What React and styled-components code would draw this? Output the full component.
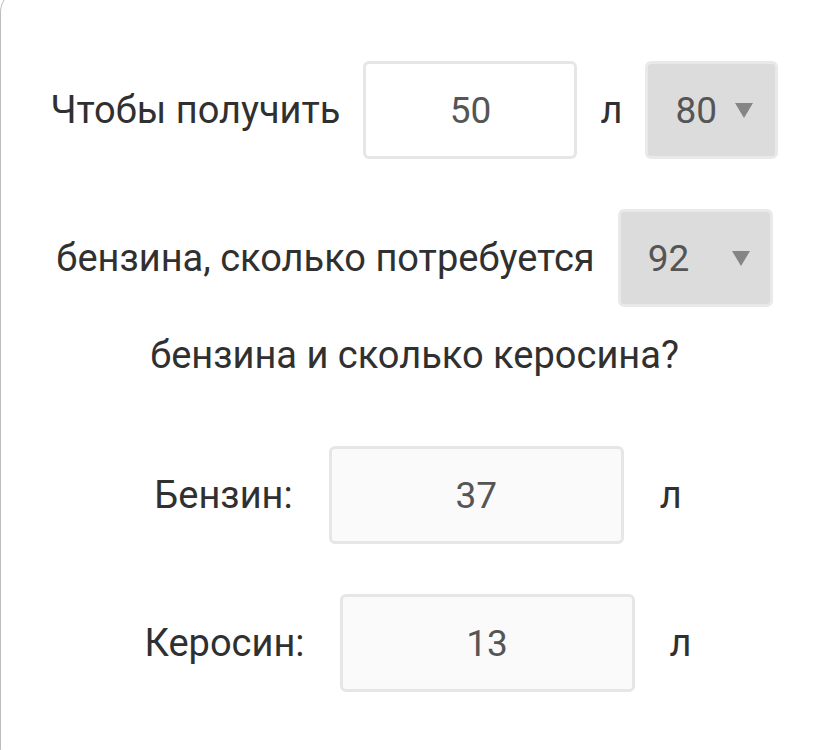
import styled, { createGlobalStyle } from "styled-components"

const GlobalStyle = createGlobalStyle`
    html, body {
        margin: 0;
        padding: 0;
        background: #fff;
        overflow: hidden;
    }

    body {
        font-family: Roboto, "Noto Sans", sans-serif;
        color: #333;
    }
`

const Card = styled.div`
    margin: -10px -40px 0 0;
    height: 780px;
    border: 1.5px solid #bdbdbd;
    border-radius: 22px;
    padding: 70px 40px 0 6px;
    box-sizing: border-box;
`

const Row = styled.div`
    display: flex;
    justify-content: center;
    align-items: center;
    gap: ${p => p.$gap || 23}px;
    margin-top: ${p => p.$top || 0}px;
    padding-left: ${p => p.$shift || 0}px;
`

const Label = styled.span`
    font-size: 38px;
    line-height: 48px;
    color: #303030;
    white-space: nowrap;
`

const Field = styled.div`
    width: ${p => p.$width}px;
    height: 98px;
    box-sizing: border-box;
    border: 3px solid #e6e6e6;
    border-radius: 6px;
    background: ${p => p.$readOnly ? "#fafafa" : "#fff"};
    display: flex;
    align-items: center;
    justify-content: center;
    font-size: 37px;
    color: #555;
`

const Select = styled.div`
    width: ${p => p.$width}px;
    height: 98px;
    box-sizing: border-box;
    border: 3px solid #e9e9e9;
    border-radius: 6px;
    background: #dcdcdc;
    display: flex;
    align-items: center;
    justify-content: space-between;
    padding: 0 ${p => p.$pad || 24}px 0 ${p => p.$padLeft || 26}px;
    font-size: 37px;
    color: #555;

    i {
        width: 0;
        height: 0;
        border-left: 9px solid transparent;
        border-right: 9px solid transparent;
        border-top: 15px solid #858585;
    }
`

function App() {
    return (
        <>
            <GlobalStyle />
            <Card>
                <Row $gap={23}>
                    <Label>Чтобы получить</Label>
                    <Field $width={214}>50</Field>
                    <Label>л</Label>
                    <Select $width={133} $padLeft={27} $pad={22}>80<i /></Select>
                </Row>
                <Row $top={50} $gap={23}>
                    <Label>бензина, сколько потребуется</Label>
                    <Select $width={155} $padLeft={27} $pad={20}>92<i /></Select>
                </Row>
                <Row $top={24}>
                    <Label>бензина и сколько керосина?</Label>
                </Row>
                <Row $top={67} $gap={36} $shift={7}>
                    <Label>Бензин:</Label>
                    <Field $width={295} $readOnly>37</Field>
                    <Label>л</Label>
                </Row>
                <Row $top={50} $gap={35} $shift={7}>
                    <Label>Керосин:</Label>
                    <Field $width={295} $readOnly>13</Field>
                    <Label>л</Label>
                </Row>
            </Card>
        </>
    )
}

export default App
